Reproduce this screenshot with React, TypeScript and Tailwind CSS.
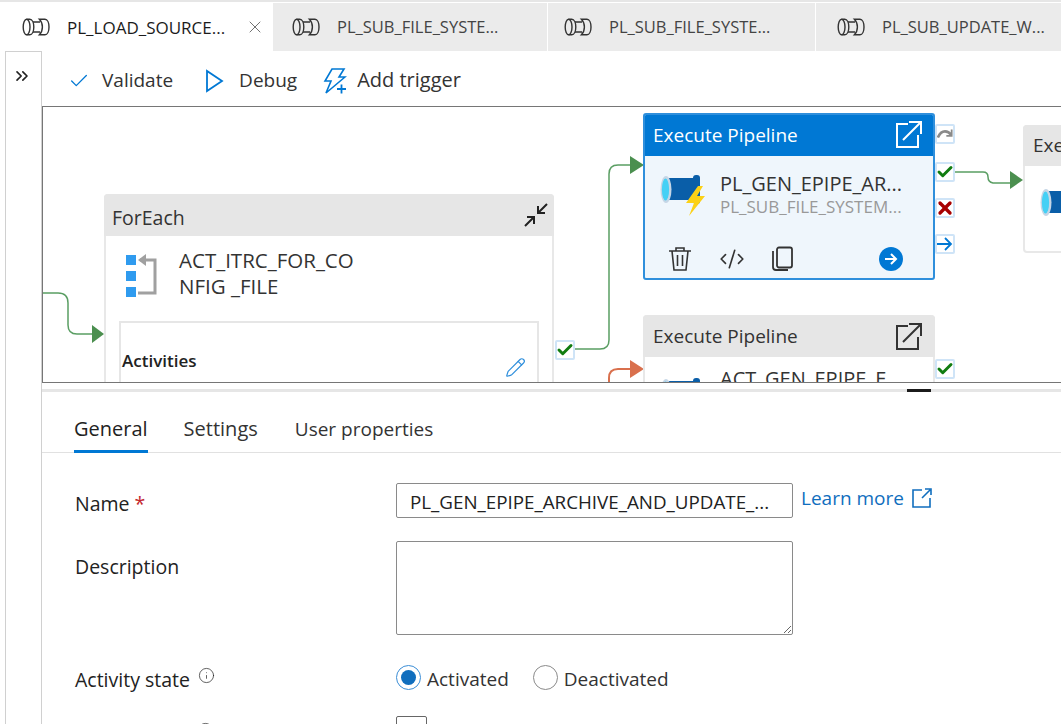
import { Check, ChevronsRight, CodeXml, Info, Pencil, X } from "lucide-react";

const font = "font-['Open_Sans','Noto_Sans',sans-serif]";

function PipeTabIcon() {
  return (
    <svg width="28" height="18" viewBox="0 0 28 18" fill="none" stroke="#333" strokeWidth="1.4" className="shrink-0">
      <ellipse cx="4.6" cy="9" rx="3.4" ry="7.8" />
      <path d="M4.6 1.2h3.2c2.4 0 4 3.4 4 7.8s-1.6 7.8-4 7.8H4.6" />
      <path d="M11 4h7M11 14h7" />
      <path d="M17.4 1.2h5.6c2.4 0 4 3.4 4 7.8s-1.6 7.8-4 7.8h-5.6c2-2 3-4.8 3-7.8s-1-5.8-3-7.8z" />
    </svg>
  );
}

function Tab({ label, active, className }: { label: string; active?: boolean; className: string }) {
  return (
    <div className={`${className} flex items-center shrink-0 h-full ${active ? "bg-white text-[#1b1b1b]" : "bg-[#ebebeb] text-[#444]"}`}>
      <PipeTabIcon />
      <span className={`ml-[17px] mt-[1px] whitespace-nowrap ${active ? "font-medium text-[17px]" : "text-[16.5px]"}`}>{label}</span>
      {active && <X size={20} strokeWidth={1} className="ml-auto mr-[7px] text-[#555]" />}
    </div>
  );
}

function OpenIcon({ color, className }: { color: string; className: string }) {
  return (
    <svg width="27" height="28" viewBox="0 0 27 28" fill="none" stroke={color} strokeWidth="2" className={className}>
      <path d="M13 4H2v23h21V15" />
      <path d="M8 20 25 3M14 2h12v12" />
    </svg>
  );
}

function PipeIcon({ bolt, className }: { bolt?: boolean; className: string }) {
  return (
    <svg width="46" height="46" viewBox="0 0 46 46" className={className}>
      <rect x="8" y="6" width="30" height="22" fill="#0a5ea8" />
      <rect x="33" y="3" width="7" height="29" rx="3" fill="#0a5ea8" />
      <ellipse cx="6" cy="17.5" rx="5.5" ry="13.5" fill="#c5d6e6" />
      <ellipse cx="5.5" cy="17.5" rx="3.6" ry="11" fill="#45d0f5" />
      {bolt && <path d="M38 14 26 31h8l-5 13 16-20h-8l6-10z" fill="#fcd116" />}
    </svg>
  );
}

function StatusBox({ top, children }: { top: string; children: React.ReactNode }) {
  return (
    <div className={`absolute ${top} w-[20px] h-[20px] flex items-center justify-center bg-white border-2 border-[#cfe4f7] rounded-[2px]`}>
      {children}
    </div>
  );
}

function GreenCheck() {
  return <Check size={18} strokeWidth={4} className="shrink-0 text-[#107c10]" />;
}

function Canvas() {
  return (
    <div className="relative h-[277px] shrink-0 border-l border-t border-b border-[#767676] overflow-hidden bg-white">
      {/* edges */}
      <svg width="1018" height="275" viewBox="0 0 1018 275" fill="none" className="absolute left-0 top-0">
        <path d="M0 186h15q10 0 10 10v22q0 9 9 9h17" stroke="#5a9e63" strokeWidth="1.5" />
        <path d="M49 218l12 9-12 9z" fill="#4b8f4f" />
        <path d="M532 242h25q9 0 9-9V67q0-9 9-9h13" stroke="#5a9e63" strokeWidth="1.5" />
        <path d="M587 49l14 9-14 9z" fill="#4b8f4f" />
        <path d="M912 65h28q5 0 5 5t5 6h18" stroke="#5a9e63" strokeWidth="1.5" />
        <path d="M967 64l13 9-13 9z" fill="#4b8f4f" />
        <path d="M566 276v-5q0-9 9-9h13" stroke="#d9704d" strokeWidth="2" />
        <path d="M587 253l14 9-14 9z" fill="#d9704d" />
      </svg>

      {/* ForEach */}
      <div className="absolute left-[61px] top-[87px] w-[450px] h-[240px] rounded-t-[4px] bg-white border-x-2 border-[#e8e8e8]">
        <div className="h-[42px] -mx-[2px] bg-[#e6e6e6] rounded-t-[4px] flex items-center justify-between pl-[8px] pr-[5px] text-[19.5px] text-[#333]">
          <span className="mt-[6px]">ForEach</span>
          <svg width="26" height="26" viewBox="0 0 26 26" fill="none" stroke="#222" strokeWidth="2">
            <path d="M2 24 11 15M4 15h7v7M24 2 15 11M22 11h-7V4" />
          </svg>
        </div>
        <div className="flex pt-[13px] pl-[20px]">
          <svg width="32" height="44" viewBox="0 0 32 44" className="shrink-0 mt-[5px]">
            <rect x="0" y="1" width="10" height="10" fill="#2f9bef" />
            <rect x="0" y="17" width="10" height="10" fill="#2f9bef" />
            <rect x="0" y="33" width="10" height="10" fill="#2f9bef" />
            <path d="M14 6h15v33H12" fill="none" stroke="#a0a0a0" strokeWidth="3" />
            <path d="M20 0l-8 6 8 6z" fill="#a0a0a0" />
          </svg>
          <div className="ml-[21px] -mt-[2px] h-[52px] text-[20.5px] leading-[26px] text-[#333]">
            ACT_ITRC_FOR_CO
            <br />
            NFIG _FILE
          </div>
        </div>
        <div className="relative mx-[13px] mt-[22px] h-[120px] border-2 border-[#e6e6e6] pl-[1px] pt-[25px] text-[17px] font-semibold text-[#222]">
          Activities
          <Pencil size={21} strokeWidth={1.4} className="absolute right-[11px] top-[34px] text-[#2f8fdc]" />
        </div>
      </div>
      <StatusBox top="left-[512px] top-[233px]">
        <GreenCheck />
      </StatusBox>

      {/* Selected pipeline */}
      <div className="absolute left-[600px] top-[6px] w-[292px] h-[167px] rounded-[3px] bg-[#eff6fc] border-2 border-[#2f8fdc] overflow-hidden">
        <div className="relative h-[41px] bg-[#0078d4] pl-[8px] flex items-center text-[19px] text-white">
          Execute Pipeline
          <OpenIcon color="#ffffff" className="absolute right-[11px] top-[5px]" />
        </div>
        <PipeIcon bolt className="absolute left-[15px] top-[57px]" />
        <div className="pl-[75px] pt-[15px] whitespace-nowrap">
          <div className="text-[20px] leading-[26px] text-[#333]">PL_GEN_EPIPE_AR...</div>
          <div className="text-[17px] leading-[20px] text-[#999]">PL_SUB_FILE_SYSTEM...</div>
        </div>
        <svg width="24" height="26" viewBox="0 0 24 26" fill="none" stroke="#333" strokeWidth="1.6" className="absolute left-[23px] top-[131px]">
          <path d="M1 5h22M8 5V2h8v3M4 5l2 19h12l2-19M9.5 9v11M14.5 9v11" />
        </svg>
        <CodeXml size={26} strokeWidth={1.5} className="absolute left-[74px] top-[131px] text-[#333]" />
        <svg width="24" height="26" viewBox="0 0 24 26" fill="none" stroke="#333" strokeWidth="1.8" className="absolute left-[125px] top-[131px]">
          <rect x="7" y="1.5" width="15" height="20" rx="2" />
          <path d="M3 5v16q0 3 3 3h12" />
        </svg>
        <div className="absolute left-[234px] top-[132px] w-[24px] h-[24px] rounded-full bg-[#0078d4] flex items-center justify-center">
          <svg width="14" height="14" viewBox="0 0 14 14" fill="none" stroke="#fff" strokeWidth="2">
            <path d="M1 7h11M7 2l5 5-5 5" />
          </svg>
        </div>
      </div>
      <StatusBox top="left-[892px] top-[17px]">
        <svg width="16" height="12" viewBox="0 0 18 12" fill="none" stroke="#8a8a8a" strokeWidth="3" className="shrink-0">
          <path d="M1 10Q4 3 9 3q4 0 7 4" />
          <path d="M16.5 1v7h-6" strokeWidth="2" />
        </svg>
      </StatusBox>
      <StatusBox top="left-[892px] top-[55px]">
        <GreenCheck />
      </StatusBox>
      <StatusBox top="left-[892px] top-[91px]">
        <X size={20} strokeWidth={4} className="shrink-0 text-[#a80000]" />
      </StatusBox>
      <StatusBox top="left-[892px] top-[127px]">
        <svg width="16" height="14" viewBox="0 0 16 14" fill="none" stroke="#0078d4" strokeWidth="1.8" className="shrink-0">
          <path d="M0 7h14M8 1l6 6-6 6" />
        </svg>
      </StatusBox>

      {/* Second pipeline */}
      <div className="absolute left-[600px] top-[208px] w-[292px] h-[120px] rounded-t-[4px] bg-white border-x-2 border-[#e8e8e8]">
        <div className="relative h-[42px] -mx-[2px] bg-[#e6e6e6] rounded-t-[4px] pl-[10px] flex items-center text-[19px] text-[#333]">
          Execute Pipeline
          <OpenIcon color="#333333" className="absolute right-[13px] top-[7px]" />
        </div>
        <PipeIcon className="absolute left-[15px] top-[60px]" />
        <div className="pl-[75px] pt-[9px] text-[20px] leading-[26px] text-[#333] whitespace-nowrap">ACT_GEN_EPIPE_F</div>
      </div>
      <StatusBox top="left-[892px] top-[252px]">
        <GreenCheck />
      </StatusBox>

      {/* Third pipeline */}
      <div className="absolute left-[980px] top-[18px] w-[292px] h-[128px] rounded-[4px] bg-white border-2 border-[#e8e8e8]">
        <div className="h-[41px] -mx-[2px] -mt-[2px] bg-[#e6e6e6] rounded-t-[4px] pl-[10px] flex items-center text-[19px] text-[#333]">
          Execute Pipeline
        </div>
        <PipeIcon className="absolute left-[15px] top-[58px]" />
      </div>
    </div>
  );
}

function Radio({ checked, label }: { checked?: boolean; label: string }) {
  return (
    <div className="flex items-center gap-[6px]">
      <div className={`w-[25px] h-[25px] rounded-full bg-white flex items-center justify-center border ${checked ? "border-[#3b8ed6]" : "border-[#8a8a8a]"}`}>
        {checked && <div className="w-[15px] h-[15px] rounded-full bg-[#106ebe]" />}
      </div>
      <span className="mt-[3px] text-[19px] text-[#333]">{label}</span>
    </div>
  );
}

function FormRow({ label, children, className }: { label: React.ReactNode; children: React.ReactNode; className?: string }) {
  return (
    <div className={`grid grid-cols-[321px_1fr] items-start ${className}`}>
      <div className="text-[19.5px] text-[#222]">{label}</div>
      {children}
    </div>
  );
}

export default function App() {
  return (
    <div className={`${font} w-[1061px] h-[724px] overflow-hidden bg-white flex flex-col`}>
      <div className="h-[3px] border-t-2 border-[#e6e6e6] shrink-0" />
      <div className="flex h-[48px] shrink-0 pl-[6px] gap-[1px]">
        <Tab label="PL_LOAD_SOURCE..." active className="w-[266px] pl-[16px]" />
        <Tab label="PL_SUB_FILE_SYSTE..." className="w-[274px] pl-[19px]" />
        <Tab label="PL_SUB_FILE_SYSTE..." className="w-[267px] pl-[16px]" />
        <Tab label="PL_SUB_UPDATE_W..." className="w-[245px] pl-[21px]" />
      </div>
      <div className="flex flex-1 min-h-0 ml-[5px] border-l border-[#d0d0d0]">
        <div className="w-[36px] shrink-0 border-t border-r border-[#d0d0d0] flex justify-center pt-[14px] pr-[3px]">
          <ChevronsRight size={20} strokeWidth={2} className="text-[#222]" />
        </div>
        <div className="flex-1 min-w-0 flex flex-col">
          <div className="h-[55px] flex items-center pt-[4px] pl-[26px] text-[19px] text-[#333] shrink-0">
            <Check size={22} strokeWidth={1.4} className="text-[#0078d4]" />
            <span className="ml-[12px]">Validate</span>
            <svg width="20" height="24" viewBox="0 0 20 24" fill="none" stroke="#0078d4" strokeWidth="1.8" className="ml-[32px]">
              <path d="M2 2v20l15-10z" />
            </svg>
            <span className="ml-[14px]">Debug</span>
            <svg width="24" height="26" viewBox="0 0 24 26" fill="none" stroke="#0078d4" strokeWidth="1.6" className="ml-[26px]">
              <path d="M9 1h12l-5 8h6L3 25l5-12H2z" />
              <path d="M14 21h9M18.5 16.5v9" strokeWidth="1.8" />
            </svg>
            <span className="ml-[10px] -mt-[1px] text-[20px]">Add trigger</span>
          </div>
          <Canvas />
          <div className="relative h-[9px] shrink-0">
            <div className="absolute left-0 right-0 bottom-0 h-[3px] bg-[#e6e6e6]" />
            <div className="absolute left-[865px] bottom-0 w-[24px] h-[3px] bg-[#1b1b1b]" />
          </div>
          <div className="flex h-[61px] shrink-0 pl-[32px] border-b border-[#e1e1e1] text-[#333]">
            <div className="h-[61px] pt-[22px] border-b-[3px] border-[#0078d4] text-[20px] text-[#222]">General</div>
            <div className="ml-[36px] pt-[22px] text-[20px]">Settings</div>
            <div className="ml-[37px] pt-[23px] text-[19px]">User properties</div>
          </div>
          <div className="pl-[33px] pt-[30px]">
            <FormRow label={<div className="mt-[6px]">Name <span className="text-[#c4262e]">*</span></div>} className="h-[58px]">
              <div className="flex items-start">
                <input
                  readOnly
                  value="PL_GEN_EPIPE_ARCHIVE_AND_UPDATE_..."
                  className="w-[397px] h-[35px] px-[13px] pt-[3px] border border-[#8a8a8a] rounded-[2px] text-[18.8px] text-[#222]"
                />
                <a className="ml-[8px] mt-[1px] flex items-center text-[19px] text-[#106ebe]">
                  Learn more
                  <svg width="20" height="20" viewBox="0 0 20 20" fill="none" stroke="#106ebe" strokeWidth="1.6" className="ml-[8px]">
                    <path d="M10 2H1v17h17v-9M10 10l8-8M13 1h6v6" />
                  </svg>
                </a>
              </div>
            </FormRow>
            <FormRow label={<div className="mt-[11px]">Description</div>} className="h-[121px]">
              <textarea readOnly className="block w-[397px] h-[94px] border border-[#8a8a8a] rounded-[2px]" />
            </FormRow>
            <FormRow
              label={
                <span className="flex items-start">
                  <span className="mt-[3px]">Activity state</span>
                  <Info size={17} strokeWidth={1} className="ml-[8px] mt-[5px] text-[#222]" />
                </span>
              }
              className="h-[54px]"
            >
              <div className="flex gap-[24px]">
                <Radio checked label="Activated" />
                <Radio label="Deactivated" />
              </div>
            </FormRow>
            <FormRow
              label={
                <span className="flex items-start">
                  <span className="mt-[12px]">Secure output</span>
                  <Info size={17} strokeWidth={1} className="-ml-[6px] mt-[6px] text-[#222]" />
                </span>
              }
            >
              <div className="w-[31px] h-[30px] border border-[#666] rounded-[2px]" />
            </FormRow>
          </div>
        </div>
      </div>
    </div>
  );
}
